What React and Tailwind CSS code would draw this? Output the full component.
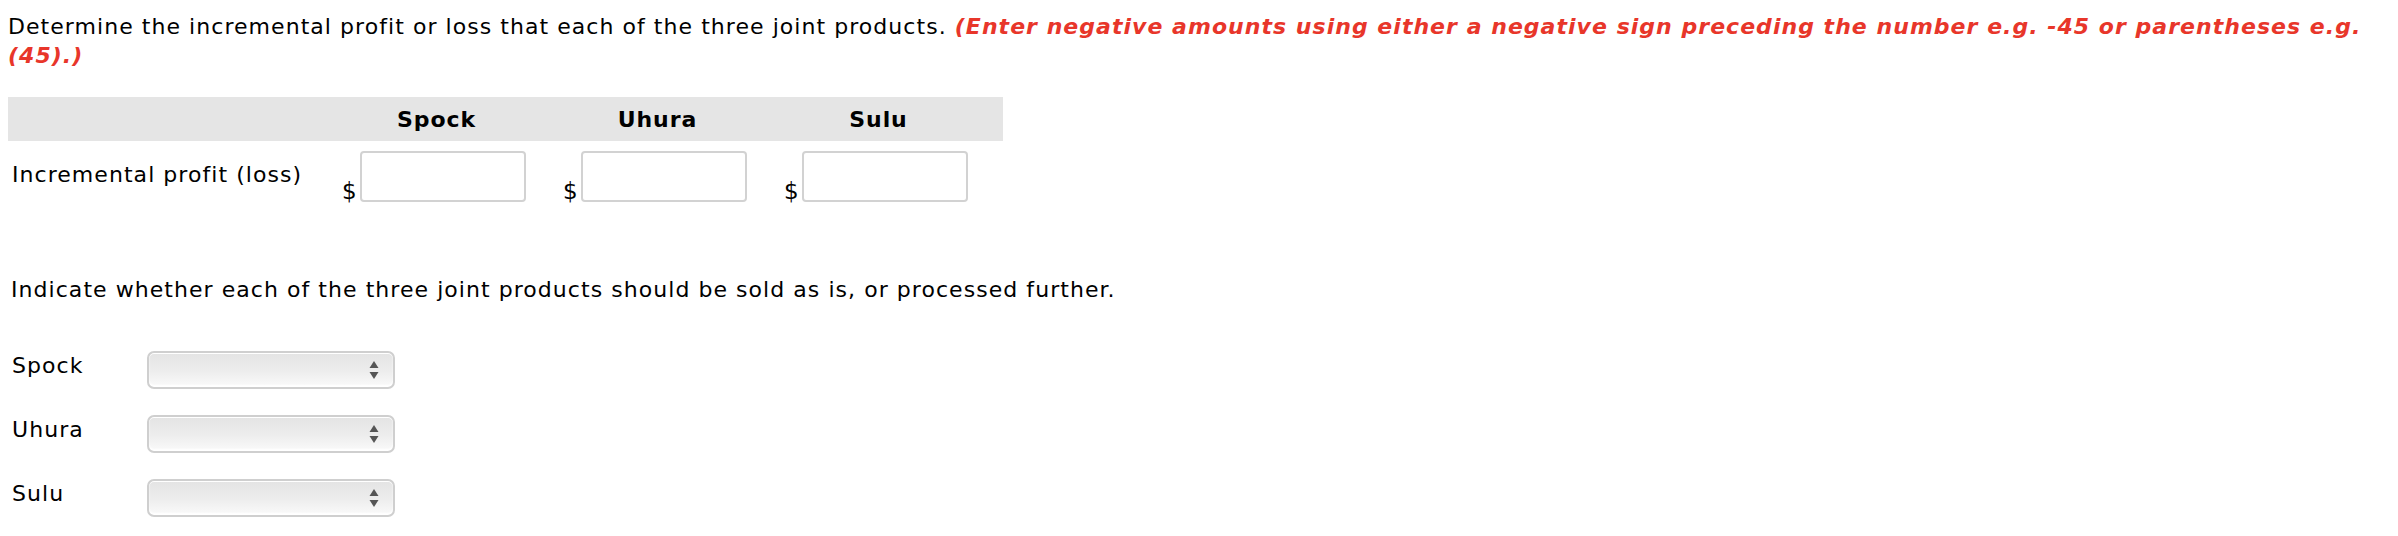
import React from 'react';

const columns = ['Spock', 'Uhura', 'Sulu'];

const Arrows = () => (
  <svg width="10" height="20" viewBox="0 0 10 20" className="absolute right-[14px] top-1/2 -translate-y-1/2">
    <path d="M5 1 L9.5 8 L0.5 8 Z" fill="#555" />
    <path d="M5 19 L9.5 12 L0.5 12 Z" fill="#555" />
  </svg>
);

const FakeSelect = () => (
  <div className="relative w-[248px] h-[38px] rounded-[7px] border-2 border-[#cfcfcf] bg-gradient-to-b from-[#e4e4e4] via-[#ececec] to-[#fafafa] shadow-[inset_0_1px_0_#ffffff,inset_0_-2px_2px_#ffffff]">
    <Arrows />
  </div>
);

const MoneyInput = () => (
  <div className="flex items-end pl-[16px]">
    <span className="leading-none mb-[-1px] tracking-normal text-[23px]">$</span>
    <input
      type="text"
      className="ml-[3px] w-[166px] h-[51px] rounded-[4px] border-2 border-[#d2d2d2] bg-white outline-none"
    />
  </div>
);

export default function App() {
  return (
    <div
      className="min-h-screen bg-white text-black text-[22px] leading-[29px] tracking-[1.05px] pt-[12px] pl-[8px]"
      style={{ fontFamily: '"DejaVu Sans", Verdana, sans-serif' }}
    >
      <p className="whitespace-nowrap">
        Determine the incremental profit or loss that each of the three joint products.{' '}
        <span className="font-bold italic text-[#e8362a] tracking-[1.03px]">
          (Enter negative amounts using either a negative sign preceding the number e.g. -45 or parentheses e.g.
          <br />
          (45).)
        </span>
      </p>

      <div className="mt-[27px] w-[995px]">
        <div className="grid grid-cols-[318px_221px_221px_221px_14px] h-[44px] items-center bg-[#e5e5e5] font-bold tracking-[0.9px]">
          <div />
          {columns.map((c) => (
            <div key={c} className="text-center">{c}</div>
          ))}
          <div />
        </div>
        <div className="grid grid-cols-[318px_221px_221px_221px_14px] pt-[10px] items-center">
          <div className="pl-[4px] -mt-[4px] whitespace-nowrap">Incremental profit (loss)</div>
          {columns.map((c) => (
            <MoneyInput key={c} />
          ))}
          <div />
        </div>
      </div>

      <p className="mt-[73px] pl-[3px]">
        Indicate whether each of the three joint products should be sold as is, or processed further.
      </p>

      <div className="mt-[47px] flex flex-col gap-[26px]">
        {columns.map((c) => (
          <div key={c} className="flex items-center">
            <div className="w-[139px] pl-[4px] -mt-[9px]">{c}</div>
            <FakeSelect />
          </div>
        ))}
      </div>
    </div>
  );
}
